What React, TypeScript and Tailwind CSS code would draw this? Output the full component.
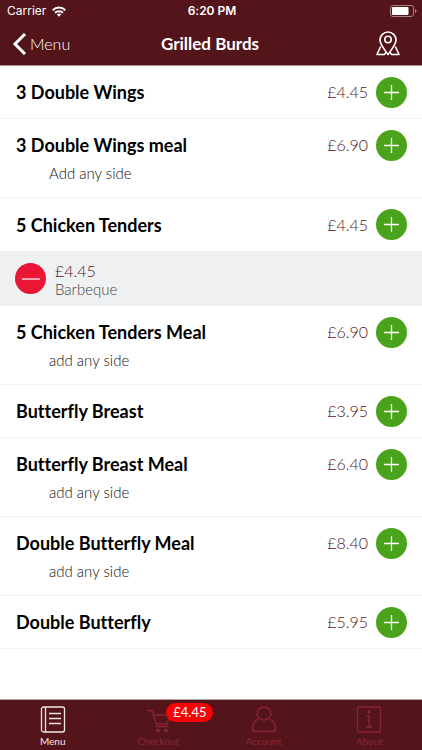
import type { ReactNode } from "react";

type Item = { name: string; price: string; note?: string; chosen?: string };

const items: Item[] = [
  { name: "3 Double Wings", price: "£4.45" },
  { name: "3 Double Wings meal", price: "£6.90", note: "Add any side" },
  { name: "5 Chicken Tenders", price: "£4.45", chosen: "Barbeque" },
  { name: "5 Chicken Tenders Meal", price: "£6.90", note: "add any side" },
  { name: "Butterfly Breast", price: "£3.95" },
  { name: "Butterfly Breast Meal", price: "£6.40", note: "add any side" },
  { name: "Double Butterfly Meal", price: "£8.40", note: "add any side" },
  { name: "Double Butterfly", price: "£5.95" },
];

function StatusBar() {
  return (
    <div className="grid h-[22px] grid-cols-3 items-center pr-[5px] pl-[7px] font-['Inter',sans-serif] text-xs text-white">
      <div className="flex items-center gap-[6px]">
        <span>Carrier</span>
        <svg width="14" height="11" viewBox="0 0 14 11" fill="none" stroke="currentColor" strokeWidth="2" aria-hidden="true">
          <path d="M0.7 4.2C4.2 0.6 9.8 0.6 13.3 4.2" />
          <path d="M3 6.8C5.2 4.6 8.8 4.6 11 6.8" />
          <path d="M4.8 8.4 7 10.7 9.2 8.4C8 7.3 6 7.3 4.8 8.4Z" fill="currentColor" stroke="none" />
        </svg>
      </div>
      <span className="text-center font-semibold">6:20 PM</span>
      <svg className="justify-self-end" width="27" height="12" viewBox="0 0 27 12" aria-hidden="true">
        <rect x="0.5" y="0.5" width="23" height="11" rx="2.5" fill="none" stroke="#a68488" />
        <rect x="2" y="2" width="16.5" height="8" rx="1" fill="#fff" />
        <path d="M25 4c2 .5 2 3.5 0 4Z" fill="#a68488" />
      </svg>
    </div>
  );
}

function Header() {
  return (
    <header className="border-b border-[#a98b8f] bg-[#53141a] text-white">
      <StatusBar />
      <div className="grid h-[43px] grid-cols-3 items-center pr-[22px] pl-3">
        <button type="button" className="flex items-center gap-[3px] justify-self-start text-base font-light">
          <svg width="15" height="22" viewBox="0 0 15 22" fill="none" stroke="currentColor" strokeWidth="3" aria-hidden="true">
            <path d="M13 1 3 11l10 10" />
          </svg>
          Menu
        </button>
        <h1 className="pl-2 text-center text-[17px] font-bold whitespace-nowrap">Grilled Burds</h1>
        <button type="button" aria-label="Find a restaurant" className="justify-self-end">
          <svg width="24" height="25" viewBox="0 0 24 25" fill="none" stroke="currentColor" strokeWidth="1.6" strokeLinejoin="round" aria-hidden="true">
            <path d="M12 23.5C9 19 4 14 4 9a8 8 0 0 1 16 0c0 5-5 10-8 14.5Z" />
            <circle cx="12" cy="8.5" r="3.2" />
            <path d="M4.6 15.5 1 23.5h7.3l1.7-2M19.4 15.5l3.6 8h-7.3l-1.7-2" />
          </svg>
        </button>
      </div>
    </header>
  );
}

function AddButton({ name }: { name: string }) {
  return (
    <button type="button" aria-label={`Add ${name}`} className="flex size-[31px] items-center justify-center rounded-full bg-[#4ba31b] text-white">
      <svg width="15" height="15" viewBox="0 0 15 15" stroke="currentColor" strokeWidth="1.3" aria-hidden="true">
        <path d="M7.5 0v15M0 7.5h15" />
      </svg>
    </button>
  );
}

function MenuRow({ item }: { item: Item }) {
  return (
    <li>
      <div className={item.chosen ? "pr-[15px] pl-4" : "border-b border-[#f1f1f1] pr-[15px] pl-4"}>
        <div className={item.chosen ? "flex h-[53px] items-center" : "flex h-[52px] items-center"}>
          <h2 className="flex-1 text-lg font-bold text-black">{item.name}</h2>
          <span className="mr-2 text-base font-light text-[#53141a]">{item.price}</span>
          <AddButton name={item.name} />
        </div>
        {item.note && <p className="-mt-2 h-[34px] pl-[33px] text-[15px] leading-5 font-light text-[#111]">{item.note}</p>}
      </div>
      {item.chosen && (
        <div className="flex h-[55px] items-center gap-[9px] bg-[#eff0f2] px-[15px]">
          <button type="button" aria-label={`Remove ${item.chosen}`} className="flex size-[31px] items-center justify-center rounded-full bg-[#e91735] text-white">
            <svg width="18" height="2" viewBox="0 0 18 2" stroke="currentColor" strokeWidth="1.2" aria-hidden="true">
              <path d="M0 1h18" />
            </svg>
          </button>
          <div className="pt-[2px]">
            <p className="text-base leading-[18px] font-light text-[#53141a]">{item.price}</p>
            <p className="text-[15px] leading-[18px] font-light text-[#444]">{item.chosen}</p>
          </div>
        </div>
      )}
    </li>
  );
}

function Tab({ label, active, badge, children }: { label: string; active?: boolean; badge?: string; children: ReactNode }) {
  return (
    <button
      type="button"
      aria-current={active ? "page" : undefined}
      className={active ? "flex flex-col items-center pt-[6px] text-[#f3e6e8]" : "flex flex-col items-center pt-[6px] text-[#8b2536]"}
    >
      <span className="relative">
        <svg width="26" height="27" viewBox="0 0 26 27" fill="none" stroke="currentColor" strokeWidth="1.3" aria-hidden="true">
          {children}
        </svg>
        {badge && (
          <span className="absolute -top-[3px] left-[21px] h-[19px] rounded-full bg-[#fb0007] px-[7px] text-[13px] leading-[19px] text-white">{badge}</span>
        )}
      </span>
      <span className="mt-px text-[10px] leading-[14px]">{label}</span>
    </button>
  );
}

export default function App() {
  return (
    <div className="flex min-h-screen flex-col bg-white font-['Lato',sans-serif] [font-variant-ligatures:none]">
      <Header />
      <main className="flex-1">
        <ul>
          {items.map((item) => (
            <MenuRow key={item.name} item={item} />
          ))}
        </ul>
      </main>
      <nav className="grid h-[51px] grid-cols-4 border-t border-[#b5a3a5] bg-[#53141a]">
        <Tab label="Menu" active>
          <rect x="1.5" y="1" width="23" height="25" rx="2" />
          <path d="M5.5 1v25M9 7.5h12M9 12.5h12M9 17.5h12" />
        </Tab>
        <Tab label="Checkout" badge="£4.45">
          <path d="M2 4.5h5l5 16h11M8.5 9h17l-3.5 9H11" />
          <circle cx="13" cy="24.5" r="1.2" fill="currentColor" />
          <circle cx="21" cy="24.5" r="1.2" fill="currentColor" />
        </Tab>
        <Tab label="Account">
          <ellipse cx="13" cy="7.5" rx="7" ry="6.5" />
          <path d="M8.5 12.5C4 14 2 17 2 21v4.5h22V21c0-4-2-7-6.5-8.5" />
        </Tab>
        <Tab label="About">
          <rect x="1.5" y="1" width="23" height="25" rx="2" />
          <path d="M10.5 10H13v11M10 21h6" />
          <circle cx="13" cy="6" r="1" fill="currentColor" />
        </Tab>
      </nav>
    </div>
  );
}
